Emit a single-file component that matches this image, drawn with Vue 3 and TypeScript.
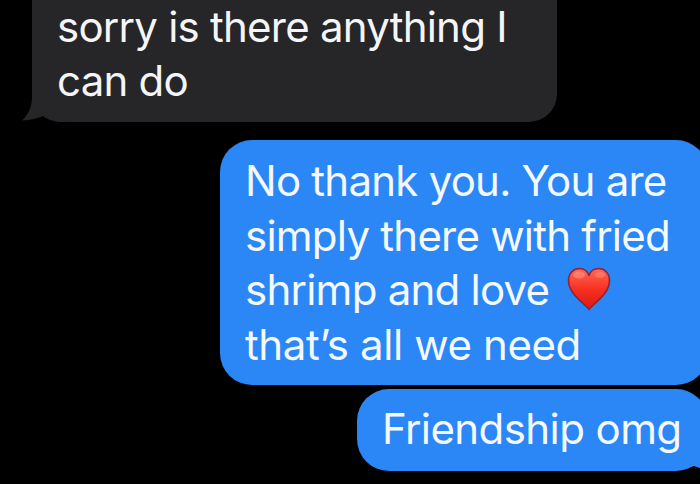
<template>
  <div class="thread">
    <div class="msg in">
      <p class="line">sorry is there anything I</p>
      <p class="line">can do</p>
      <svg class="tail" viewBox="0 0 50 26" width="50" height="26">
        <path d="M10 0 C10 9 8 17 0 24.5 C8 24.5 16 22 24 19 C30 23 38 25.5 50 26 L50 0 Z" fill="#262528" />
      </svg>
    </div>
    <div class="msg out big">
      <p v-for="(l, i) in lines" :key="i" class="line">
        {{ l }}
        <svg v-if="i === 2" class="heart" viewBox="0 0 44 44" width="44" height="44">
          <defs>
            <linearGradient id="h" x1="0" y1="0" x2="0" y2="1">
              <stop offset="0" stop-color="#ff6a58" />
              <stop offset="0.5" stop-color="#f8301f" />
              <stop offset="1" stop-color="#d81a16" />
            </linearGradient>
          </defs>
          <path d="M22 42.5 C17 36 1.5 27 1.5 13.5 C1.5 6 6.5 1.5 12.5 1.5 C17 1.5 20.5 4 22 8.5 C23.5 4 27 1.5 31.5 1.5 C37.5 1.5 42.5 6 42.5 13.5 C42.5 27 27 36 22 42.5 Z" fill="url(#h)" stroke="#8f2337" stroke-width="1.6" stroke-linejoin="round" />
          <ellipse cx="12" cy="8" rx="6" ry="3.5" fill="#ff9a8a" opacity="0.55" />
          <ellipse cx="33" cy="8" rx="5" ry="3" fill="#ff9a8a" opacity="0.4" />
        </svg>
      </p>
    </div>
    <div class="msg out small">
      <p class="line">Friendship omg</p>
      <svg class="tail-out" viewBox="0 0 20 16" width="20" height="16">
        <path d="M0 0 L20 0 L20 14 C16 13.5 11 12 7 10 C4 11.5 2 12.5 0 13 Z" fill="#2b87f5" />
      </svg>
    </div>
  </div>
</template>

<script setup lang="ts">
const lines: string[] = [
  'No thank you. You are',
  'simply there with fried',
  'shrimp and love',
  'that’s all we need'
]
</script>

<style>
html,
body {
  background: #000;
}
</style>

<style scoped>
.thread {
  width: 700px;
  height: 484px;
  overflow: hidden;
  background: #000;
  display: flex;
  flex-direction: column;
  font-family: Inter, "Liberation Sans", sans-serif;
  color: #f4f5f8;
}

.msg {
  position: relative;
  box-sizing: border-box;
}

.line {
  margin: 0;
  height: 54px;
  line-height: 54px;
  font-size: 42px;
  letter-spacing: -0.76px;
  white-space: nowrap;
}

.in {
  width: 525px;
  margin-left: 32px;
  margin-top: -30px;
  padding: 30px 25px 14px;
  height: 152px;
  background: #262528;
  border-radius: 28px;
}

.tail {
  position: absolute;
  left: -10px;
  bottom: 0;
}

.out {
  background: #2b87f5;
  color: #f4f8ff;
}

.big {
  margin-top: 18px;
  margin-left: 220px;
  width: 488px;
  height: 245px;
  padding: 14px 25px;
  border-radius: 32px;
}

.big .line {
  height: 54.5px;
  line-height: 54.5px;
}

.big .line:nth-child(4) {
  letter-spacing: -0.38px;
}

.heart {
  position: absolute;
  left: 347px;
  top: 127px;
}

.small {
  margin-top: 4px;
  margin-left: 357px;
  width: 351px;
  height: 82px;
  padding: 13px 25px;
  border-radius: 32px;
}

.small .line {
  letter-spacing: -0.58px;
}

.tail-out {
  position: absolute;
  left: 328px;
  top: 66px;
}
</style>
